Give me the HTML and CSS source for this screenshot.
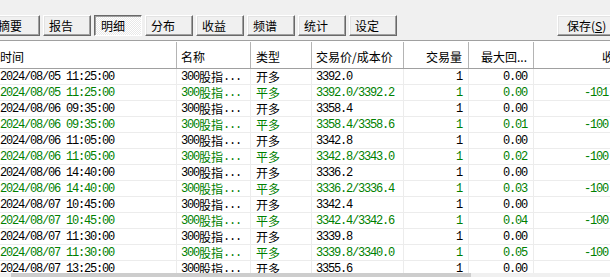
FILE: index.html
```html
<!DOCTYPE html>
<html lang="zh-CN">
<head>
<meta charset="utf-8">
<title>明细</title>
<link rel="stylesheet" href="styles.css">
</head>
<body>
<div class="app">
  <div class="toolbar">
    <button class="btn">摘要</button>
    <button class="btn">报告</button>
    <button class="btn pressed">明细</button>
    <button class="btn">分布</button>
    <button class="btn">收益</button>
    <button class="btn">频谱</button>
    <button class="btn">统计</button>
    <button class="btn">设定</button>
    <button class="btn save">保存(<u>S</u>)</button>
  </div>
  <div class="list">
    <div class="row head">
      <div class="c c1">时间</div>
      <div class="c c2">名称</div>
      <div class="c c3">类型</div>
      <div class="c c4">交易价/成本价</div>
      <div class="c c5 r">交易量</div>
      <div class="c c6 r">最大回...</div>
      <div class="c c7 r">收益</div>
    </div>
    <div class="row"><div class="c c1 m">2024/08/05 11:25:00</div><div class="c c2"><span class="m">300</span>股指<span class="m">...</span></div><div class="c c3">开多</div><div class="c c4 m">3392.0</div><div class="c c5 r m">1</div><div class="c c6 r m">0.00</div><div class="c c7 r m"></div></div>
    <div class="row g"><div class="c c1 m">2024/08/05 11:25:00</div><div class="c c2"><span class="m">300</span>股指<span class="m">...</span></div><div class="c c3">平多</div><div class="c c4 m">3392.0/3392.2</div><div class="c c5 r m">1</div><div class="c c6 r m">0.00</div><div class="c c7 r m">-101.00</div></div>
    <div class="row"><div class="c c1 m">2024/08/06 09:35:00</div><div class="c c2"><span class="m">300</span>股指<span class="m">...</span></div><div class="c c3">开多</div><div class="c c4 m">3358.4</div><div class="c c5 r m">1</div><div class="c c6 r m">0.00</div><div class="c c7 r m"></div></div>
    <div class="row g"><div class="c c1 m">2024/08/06 09:35:00</div><div class="c c2"><span class="m">300</span>股指<span class="m">...</span></div><div class="c c3">平多</div><div class="c c4 m">3358.4/3358.6</div><div class="c c5 r m">1</div><div class="c c6 r m">0.01</div><div class="c c7 r m">-100.00</div></div>
    <div class="row"><div class="c c1 m">2024/08/06 11:05:00</div><div class="c c2"><span class="m">300</span>股指<span class="m">...</span></div><div class="c c3">开多</div><div class="c c4 m">3342.8</div><div class="c c5 r m">1</div><div class="c c6 r m">0.00</div><div class="c c7 r m"></div></div>
    <div class="row g"><div class="c c1 m">2024/08/06 11:05:00</div><div class="c c2"><span class="m">300</span>股指<span class="m">...</span></div><div class="c c3">平多</div><div class="c c4 m">3342.8/3343.0</div><div class="c c5 r m">1</div><div class="c c6 r m">0.02</div><div class="c c7 r m">-100.00</div></div>
    <div class="row"><div class="c c1 m">2024/08/06 14:40:00</div><div class="c c2"><span class="m">300</span>股指<span class="m">...</span></div><div class="c c3">开多</div><div class="c c4 m">3336.2</div><div class="c c5 r m">1</div><div class="c c6 r m">0.00</div><div class="c c7 r m"></div></div>
    <div class="row g"><div class="c c1 m">2024/08/06 14:40:00</div><div class="c c2"><span class="m">300</span>股指<span class="m">...</span></div><div class="c c3">平多</div><div class="c c4 m">3336.2/3336.4</div><div class="c c5 r m">1</div><div class="c c6 r m">0.03</div><div class="c c7 r m">-100.00</div></div>
    <div class="row"><div class="c c1 m">2024/08/07 10:45:00</div><div class="c c2"><span class="m">300</span>股指<span class="m">...</span></div><div class="c c3">开多</div><div class="c c4 m">3342.4</div><div class="c c5 r m">1</div><div class="c c6 r m">0.00</div><div class="c c7 r m"></div></div>
    <div class="row g"><div class="c c1 m">2024/08/07 10:45:00</div><div class="c c2"><span class="m">300</span>股指<span class="m">...</span></div><div class="c c3">平多</div><div class="c c4 m">3342.4/3342.6</div><div class="c c5 r m">1</div><div class="c c6 r m">0.04</div><div class="c c7 r m">-100.00</div></div>
    <div class="row"><div class="c c1 m">2024/08/07 11:30:00</div><div class="c c2"><span class="m">300</span>股指<span class="m">...</span></div><div class="c c3">开多</div><div class="c c4 m">3339.8</div><div class="c c5 r m">1</div><div class="c c6 r m">0.00</div><div class="c c7 r m"></div></div>
    <div class="row g"><div class="c c1 m">2024/08/07 11:30:00</div><div class="c c2"><span class="m">300</span>股指<span class="m">...</span></div><div class="c c3">平多</div><div class="c c4 m">3339.8/3340.0</div><div class="c c5 r m">1</div><div class="c c6 r m">0.05</div><div class="c c7 r m">-100.00</div></div>
    <div class="row"><div class="c c1 m">2024/08/07 13:25:00</div><div class="c c2"><span class="m">300</span>股指<span class="m">...</span></div><div class="c c3">开多</div><div class="c c4 m">3355.6</div><div class="c c5 r m">1</div><div class="c c6 r m">0.00</div><div class="c c7 r m"></div></div>
  </div>
  <div class="hscroll"><div class="thumb"></div></div>
</div>
</body>
</html>
```
FILE: styles.css
```css
html, body {
  margin: 0;
  padding: 0;
  background: #f0f0f0;
}
body {
  width: 610px;
  height: 277px;
  overflow: hidden;
  font-family: "Noto Sans CJK SC", "Liberation Sans", sans-serif;
  font-size: 12px;
  color: #000;
}
.app {
  display: flex;
  flex-direction: column;
  height: 277px;
  overflow: hidden;
}
.toolbar {
  display: flex;
  gap: 3px;
  height: 41px;
  box-sizing: border-box;
  padding-top: 15px;
  margin-left: -8px;
  margin-right: -7px;
  border-bottom: 1px solid #a0a0a0;
  flex: none;
}
.btn {
  box-sizing: border-box;
  width: 48px;
  height: 21px;
  margin: 0;
  padding: 0 0 0 5px;
  text-align: left;
  font-family: "Noto Sans CJK SC", sans-serif;
  font-size: 12px;
  line-height: 17px;
  color: #000;
  background: #f0f0f0;
  border: 1px solid;
  border-color: #ffffff #696969 #696969 #ffffff;
  box-shadow: inset -1px -1px 0 #a0a0a0, inset 1px 1px 0 #e3e3e3;
}
.btn.pressed {
  border-color: #696969 #ffffff #ffffff #696969;
  box-shadow: inset 1px 1px 0 #a0a0a0;
  background: repeating-conic-gradient(#ffffff 0 25%, #e8e8e8 0 50%) 0 0 / 2px 2px;
  padding-left: 6px;
}
.btn.save {
  margin-left: auto;
  width: 60px;
  padding-left: 9px;
}
.list {
  flex: 1;
  min-height: 0;
  overflow: hidden;
  background: #fff;
  border-top: 1px solid #ffffff;
}
.row {
  display: grid;
  grid-template-columns: 177px 74px 61px 92px 65px 65px 98px;
  width: 632px;
  height: 16px;
  box-sizing: border-box;
  border-bottom: 1px solid #ececec;
}
.row.head {
  height: 27px;
  border-bottom: 1px solid #a0a0a0;
}
.c {
  box-sizing: border-box;
  border-right: 1px solid #ececec;
  white-space: nowrap;
  display: flex;
  align-items: center;
  height: 15px;
  padding: 0 4px;
}
.c .m {
  display: block;
}
.head .c {
  height: 26px;
  border-right: 1px solid #b4b4b4;
  padding-top: 2px;
}
.c7, .head .c7 {
  border-right: none;
}
.c1 { padding-left: 0; }
.c3 { padding-left: 5px; }
.r {
  justify-content: flex-end;
  padding-right: 6px;
}
.m {
  font-family: "Liberation Mono", monospace;
  font-size: 12px;
  letter-spacing: -1.2px;
}
.g { color: #008000; }
.hscroll {
  flex: none;
  height: 4px;
  background: #f0f0f0;
}
.thumb {
  margin-left: 11px;
  width: 460px;
  height: 4px;
  background: #cdcdcd;
}
```
